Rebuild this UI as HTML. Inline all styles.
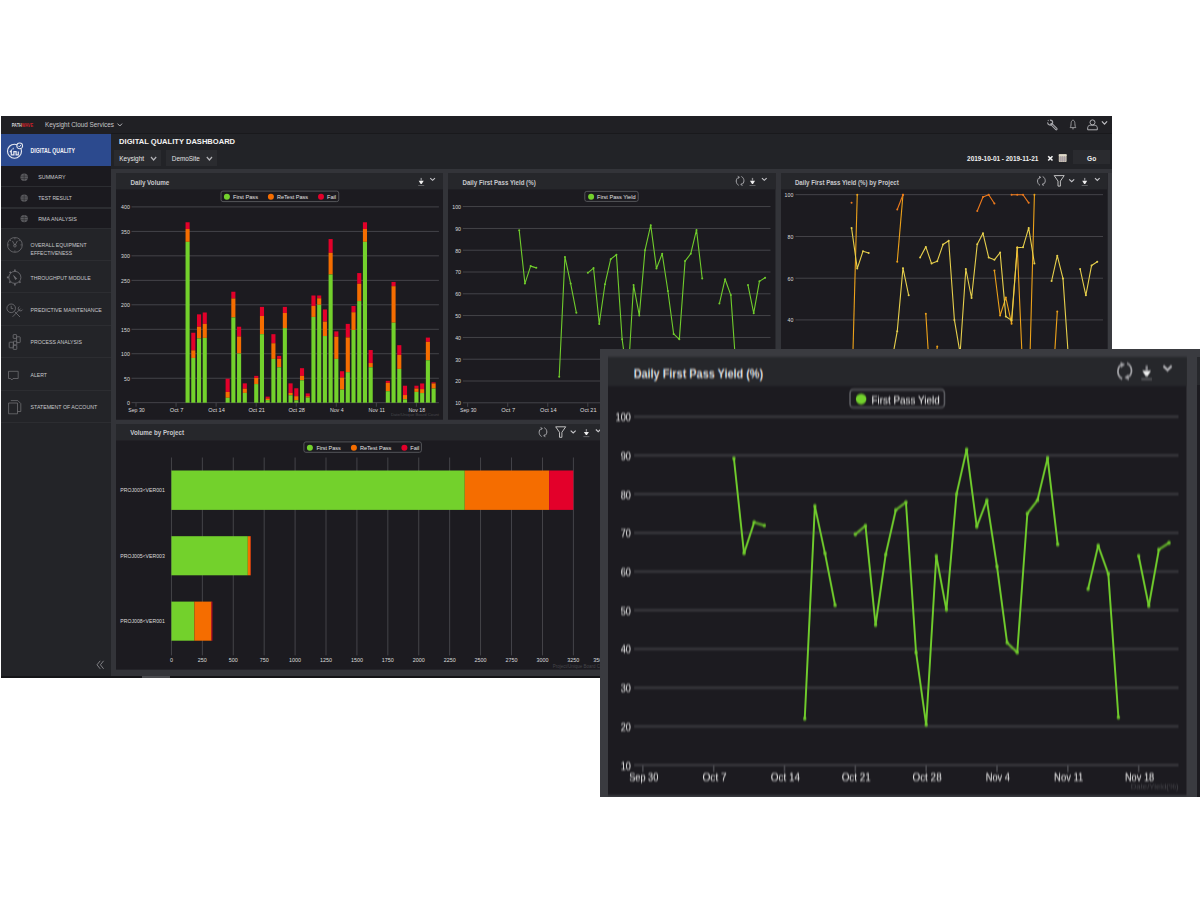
<!DOCTYPE html><html><head><meta charset="utf-8"><style>
html,body{margin:0;padding:0;background:#ffffff;width:1200px;height:900px;overflow:hidden;position:relative;font-family:"Liberation Sans", sans-serif}
svg{display:block;position:absolute}
</style></head><body>
<div style="position:absolute;left:1px;top:116px;width:1111px;height:17.7px;background:#202024"></div><svg width="1200" height="20" style="position:absolute;left:0;top:116px" font-family='"Liberation Sans", sans-serif'>
<g transform="translate(0,-116)">
<text x="11.8" y="127.1" font-size="4.9" fill="#d8d8d8" font-weight="bold" textLength="21.2" lengthAdjust="spacingAndGlyphs">PATH<tspan fill="#d0202a">WAVE</tspan></text>
<text x="45.00" y="127.10" font-size="7.0" fill="#c6c6c8" font-weight="normal" text-anchor="start" textLength="69.00" lengthAdjust="spacingAndGlyphs">Keysight Cloud Services</text>
<path d="M117.50,123.60 L119.80,126.00 L122.10,123.60" fill="none" stroke="#b0b0b4" stroke-width="1.0"/>
<g fill="none" stroke-linecap="round"><path d="M1051.5,124.2 L1056.3,129" stroke="#a8a8ac" stroke-width="2.6"/><path d="M1051.5,124.2 L1056.3,129" stroke="#202024" stroke-width="0.9"/><circle cx="1050.2" cy="122.6" r="2.5" stroke="#a8a8ac" stroke-width="1.1"/><path d="M1047.2,121.6 L1049.6,122.1 L1049.2,119.4" stroke="#202024" stroke-width="1.3"/></g>
<g fill="none" stroke="#a0a0a4" stroke-width="0.9"><path d="M1070.2,127.6 C1071.2,126.5 1071,123.5 1071.2,122.5 C1071.5,120.8 1072.3,120.2 1073,120.2 C1073.7,120.2 1074.5,120.8 1074.8,122.5 C1075,123.5 1074.8,126.5 1075.8,127.6 Z M1072.2,128.8 L1073.8,128.8"/></g>
<g fill="none" stroke="#b4b4b8" stroke-width="0.95"><circle cx="1092.5" cy="122.4" r="2.5"/><path d="M1087.7,129.8 L1087.7,127.6 C1087.7,125.8 1089.5,125.3 1090.6,125.2 L1094.4,125.2 C1095.5,125.3 1097.3,125.8 1097.3,127.6 L1097.3,129.8 Z"/></g>
<path d="M1101.90,121.40 L1104.50,124.20 L1107.10,121.40" fill="none" stroke="#c0c0c4" stroke-width="1.15"/>
</g></svg>
<div style="position:absolute;left:1px;top:133.7px;width:110px;height:543.8px;background:#232428"></div>
<div style="position:absolute;left:1px;top:133.7px;width:110px;height:31.9px;background:#2c4a8e"></div>
<div style="position:absolute;left:1px;top:165.6px;width:110px;height:62px;background:#1b1a1f"></div>
<div style="position:absolute;left:1px;top:186.2px;width:110px;height:1.3px;background:#2c2d31"></div>
<div style="position:absolute;left:1px;top:207.4px;width:110px;height:1.3px;background:#2c2d31"></div>
<div style="position:absolute;left:1px;top:227.6px;width:110px;height:1.2px;background:#2c2d31"></div>
<div style="position:absolute;left:1px;top:260.2px;width:110px;height:1.0px;background:#2c2d31"></div>
<div style="position:absolute;left:1px;top:292.4px;width:110px;height:1.0px;background:#2c2d31"></div>
<div style="position:absolute;left:1px;top:325.1px;width:110px;height:1.0px;background:#2c2d31"></div>
<div style="position:absolute;left:1px;top:357.4px;width:110px;height:1.0px;background:#2c2d31"></div>
<div style="position:absolute;left:1px;top:390.0px;width:110px;height:1.0px;background:#2c2d31"></div>
<div style="position:absolute;left:1px;top:422.3px;width:110px;height:1.0px;background:#2c2d31"></div><svg width="112" height="562" style="position:absolute;left:0;top:116px" font-family='"Liberation Sans", sans-serif'>
<g transform="translate(0,-116)">
<text x="30.50" y="152.80" font-size="6.3" fill="#f2f2f6" font-weight="bold" text-anchor="start" textLength="44.50" lengthAdjust="spacingAndGlyphs">DIGITAL QUALITY</text>
<g transform="translate(14.5,151.2)" fill="none" stroke="#e6e8f0" stroke-width="1.15"><circle r="7"/><path d="M-4.6,1 L-3.2,-0.6 L-3.2,3.6 L-0.6,3.6 L-0.6,0.4 L1.6,0.4 L1.6,3.6 L3.8,3.6 L3.8,0.4" stroke-width="1.2"/><path d="M-1.6,-1.6 L-1.2,-3.4" stroke-width="1"/><circle cx="5.2" cy="-5.3" r="2.9" fill="#2c4a8e" stroke-width="1.05"/><path d="M3.9,-5.3 L4.9,-4.3 L6.5,-6.3" stroke-width="0.9"/></g>
<text x="38.20" y="179.20" font-size="6.1" fill="#c9c9cc" font-weight="normal" text-anchor="start" textLength="27.30" lengthAdjust="spacingAndGlyphs">SUMMARY</text>
<g transform="translate(24.2,177.3)"><circle r="3.7" fill="#5c5c60"/><path d="M-3.5,-1.1 L3.5,-1.1 M-3.5,1.1 L3.5,1.1 M0,-3.6 L0,3.6" stroke="#2a2a2e" stroke-width="0.6"/></g>
<text x="38.20" y="200.00" font-size="6.1" fill="#c9c9cc" font-weight="normal" text-anchor="start" textLength="33.70" lengthAdjust="spacingAndGlyphs">TEST RESULT</text>
<g transform="translate(24.2,198.1)"><circle r="3.7" fill="#5c5c60"/><path d="M-3.5,-1.1 L3.5,-1.1 M-3.5,1.1 L3.5,1.1 M0,-3.6 L0,3.6" stroke="#2a2a2e" stroke-width="0.6"/></g>
<text x="38.20" y="220.50" font-size="6.1" fill="#c9c9cc" font-weight="normal" text-anchor="start" textLength="38.70" lengthAdjust="spacingAndGlyphs">RMA ANALYSIS</text>
<g transform="translate(24.2,218.6)"><circle r="3.7" fill="#5c5c60"/><path d="M-3.5,-1.1 L3.5,-1.1 M-3.5,1.1 L3.5,1.1 M0,-3.6 L0,3.6" stroke="#2a2a2e" stroke-width="0.6"/></g>
<text x="30.60" y="247.10" font-size="6.1" fill="#c9c9cc" font-weight="normal" text-anchor="start" textLength="56.00" lengthAdjust="spacingAndGlyphs">OVERALL EQUIPMENT</text>
<text x="30.60" y="255.10" font-size="6.1" fill="#c9c9cc" font-weight="normal" text-anchor="start" textLength="41.50" lengthAdjust="spacingAndGlyphs">EFFECTIVENESS</text>
<text x="30.60" y="279.50" font-size="6.1" fill="#c9c9cc" font-weight="normal" text-anchor="start" textLength="60.10" lengthAdjust="spacingAndGlyphs">THROUGHPUT MODULE</text>
<text x="30.60" y="311.90" font-size="6.1" fill="#c9c9cc" font-weight="normal" text-anchor="start" textLength="71.20" lengthAdjust="spacingAndGlyphs">PREDICTIVE MAINTENANCE</text>
<text x="30.60" y="344.40" font-size="6.1" fill="#c9c9cc" font-weight="normal" text-anchor="start" textLength="51.30" lengthAdjust="spacingAndGlyphs">PROCESS ANALYSIS</text>
<text x="30.60" y="376.80" font-size="6.1" fill="#c9c9cc" font-weight="normal" text-anchor="start" textLength="16.40" lengthAdjust="spacingAndGlyphs">ALERT</text>
<text x="30.60" y="409.20" font-size="6.1" fill="#c9c9cc" font-weight="normal" text-anchor="start" textLength="66.60" lengthAdjust="spacingAndGlyphs">STATEMENT OF ACCOUNT</text>
<g transform="translate(14.9,244.9)" fill="none" stroke="#6e6e72" stroke-width="0.8"><circle r="7.4"/><path d="M-2.5,-4 L0,0.5 L2.5,-4 M0,-7 L0,-5.5 M5.6,0 L7,0 M-5.6,0 L-7,0 M0,5.6 L0,7 M-4,-4 L-5,-5 M4,-4 L5,-5"/><circle cx="0" cy="0.8" r="1.3"/></g>
<g transform="translate(14.9,277.4)" fill="none" stroke="#6e6e72" stroke-width="0.85"><circle r="6"/><path d="M0,-8 L0,-6 M-8,0 L-6,0 M-5.2,-5.6 L-4.2,-4.4 M-5.6,5.2 L-4.4,4.2 M0,6 L0,8 M5.6,5.2 L4.4,4.2" stroke-width="1.6"/><path d="M-1.2,-1.8 L1.8,1.2 L0.6,2 Z" fill="#6e6e72"/></g>
<g fill="none" stroke="#6e6e72" stroke-width="0.85"><circle cx="11.2" cy="308.3" r="4.3"/><path d="M11.2,305.8 L11.2,308.6 L13.2,308.6"/><path d="M12.6,316.8 L20.6,308.6 M14.6,311.6 L20,317"/><path d="M19.4,306.6 A2.3,2.3 0 1 0 22.6,309.6"/></g>
<g fill="none" stroke="#6e6e72" stroke-width="0.85"><rect x="13.2" y="334.6" width="3.4" height="3.8" rx="0.5"/><rect x="16.6" y="336.8" width="3.6" height="5.8" rx="0.5"/><rect x="9.2" y="342.2" width="4.2" height="5.6" rx="0.5"/><rect x="13.4" y="341.2" width="3.4" height="3.8" rx="0.5"/><rect x="13.2" y="345.2" width="3.6" height="4.2" rx="0.5"/></g>
<path d="M8.5,371.3 L18.2,371.3 L18.2,378.5 L13,378.5 L11.8,380 L10.6,378.5 L8.5,378.5 Z" fill="none" stroke="#6e6e72" stroke-width="0.8"/>
<g fill="none" stroke="#6e6e72" stroke-width="0.8"><path d="M8.6,403 L8.6,413.8 L17.5,413.8 L17.5,403 Z M10.8,400.6 L17.8,400.6 L20.8,403.6 L20.8,411.5 L17.5,411.5"/></g>
<path d="M100.2,660.8 L97,664.8 L100.2,668.8 M103.6,660.8 L100.4,664.8 L103.6,668.8" fill="none" stroke="#8a8a8e" stroke-width="0.9"/>
</g></svg>
<div style="position:absolute;left:111px;top:133.7px;width:1001px;height:544px;background:#333439"></div>
<div style="position:absolute;left:111px;top:133.7px;width:1001px;height:35px;background:#222327"></div>
<div style="position:absolute;left:114.1px;top:150.1px;width:47.2px;height:15.6px;background:#2a2b2f"></div>
<div style="position:absolute;left:166px;top:150.1px;width:51px;height:15.6px;background:#2a2b2f"></div>
<div style="position:absolute;left:1073px;top:150.1px;width:37.1px;height:14.4px;background:#2a2b2f"></div>
<div style="position:absolute;left:111px;top:133.2px;width:1001px;height:0.8px;background:#19191c"></div>
<div style="position:absolute;left:1107.6px;top:172.9px;width:4.2px;height:503.2px;background:#3a3b40"></div><svg width="1200" height="60" style="position:absolute;left:0;top:116px" font-family='"Liberation Sans", sans-serif'>
<g transform="translate(0,-116)">
<text x="119.10" y="143.90" font-size="7.8" fill="#f2f2f2" font-weight="bold" text-anchor="start" textLength="116.00" lengthAdjust="spacingAndGlyphs">DIGITAL QUALITY DASHBOARD</text>
<text x="119.30" y="161.10" font-size="7.0" fill="#e8e8e8" font-weight="normal" text-anchor="start" textLength="24.80" lengthAdjust="spacingAndGlyphs">Keysight</text>
<path d="M151.00,157.00 L153.60,160.00 L156.20,157.00" fill="none" stroke="#b4b4b8" stroke-width="1.2"/>
<text x="171.80" y="161.10" font-size="7.0" fill="#e0e0e0" font-weight="normal" text-anchor="start" textLength="28.00" lengthAdjust="spacingAndGlyphs">DemoSite</text>
<path d="M206.80,157.00 L209.40,160.00 L212.00,157.00" fill="none" stroke="#b4b4b8" stroke-width="1.2"/>
<text x="967.10" y="160.90" font-size="6.9" fill="#f0f0f0" font-weight="bold" text-anchor="start" textLength="71.30" lengthAdjust="spacingAndGlyphs">2019-10-01 - 2019-11-21</text>
<path d="M1048.2,156.2 l4.3,4.3 M1052.5,156.2 l-4.3,4.3" stroke="#f2f2f2" stroke-width="1.6"/>
<g><rect x="1058.8" y="154.3" width="7.8" height="7.7" rx="0.8" fill="#cfc9b4"/><rect x="1058.8" y="154.3" width="7.8" height="1.6" fill="#e0dccc"/><path d="M1060.8,156 L1060.8,162 M1062.7,156 L1062.7,162 M1064.6,156 L1064.6,162 M1058.8,158 L1066.6,158 M1058.8,160 L1066.6,160" stroke="#8a7d9a" stroke-width="0.5"/></g>
<text x="1091.60" y="160.60" font-size="7.0" fill="#f0f0f0" font-weight="bold" text-anchor="middle" textLength="9.20" lengthAdjust="spacingAndGlyphs">Go</text>
</g></svg>
<svg width="327.00" height="246.70" style="position:absolute;left:116.00px;top:172.90px" font-family='"Liberation Sans", sans-serif'>
<g transform="translate(-116.00,-172.90)">
<rect x="116.00" y="172.90" width="327.00" height="246.70" fill="#1c1b20"/>
<rect x="116.00" y="172.90" width="327.00" height="16.40" fill="#26272b"/>
<text x="130.40" y="184.70" font-size="7.3" fill="#c6c7cb" font-weight="bold" text-anchor="start" textLength="38.90" lengthAdjust="spacingAndGlyphs">Daily Volume</text>
<g transform="translate(421.20,180.80)"><rect x="-0.65" y="-3" width="1.3" height="2.6" fill="#8c8c90"/><path d="M-2.5,-0.2 L2.5,-0.2 L0.5,3 L-0.5,3 Z" fill="#f0f0f0"/><rect x="-3" y="4.2" width="6" height="0.8" fill="#6e6e72"/></g>
<path d="M430.25,177.98 L432.60,180.22 L434.95,177.98" fill="none" stroke="#c4c4c8" stroke-width="1.15"/>
<rect x="221.00" y="191.00" width="117.75" height="10.50" rx="2" fill="none" stroke="#5a5b60" stroke-width="0.9"/>
<circle cx="226.90" cy="196.6" r="3" fill="#73d12c"/>
<text x="233.00" y="199.20" font-size="6.1" fill="#e4e4e4" font-weight="normal" text-anchor="start" textLength="25.00" lengthAdjust="spacingAndGlyphs">First Pass</text>
<circle cx="270.90" cy="196.6" r="3" fill="#f56d00"/>
<text x="277.00" y="199.20" font-size="6.1" fill="#e4e4e4" font-weight="normal" text-anchor="start" textLength="31.00" lengthAdjust="spacingAndGlyphs">ReTest Pass</text>
<circle cx="321.00" cy="196.6" r="3" fill="#e3002a"/>
<text x="327.00" y="199.20" font-size="6.1" fill="#e4e4e4" font-weight="normal" text-anchor="start" textLength="9.00" lengthAdjust="spacingAndGlyphs">Fail</text>
<rect x="131.5" y="402.15" width="307.40" height="0.9" fill="#48484d"/>
<text x="129.80" y="405.10" font-size="6.0" fill="#dcdcdc" font-weight="normal" text-anchor="end" textLength="2.90" lengthAdjust="spacingAndGlyphs">0</text>
<rect x="131.5" y="377.68" width="307.40" height="0.9" fill="#48484d"/>
<text x="129.80" y="380.62" font-size="6.0" fill="#dcdcdc" font-weight="normal" text-anchor="end" textLength="5.80" lengthAdjust="spacingAndGlyphs">50</text>
<rect x="131.5" y="353.20" width="307.40" height="0.9" fill="#48484d"/>
<text x="129.80" y="356.15" font-size="6.0" fill="#dcdcdc" font-weight="normal" text-anchor="end" textLength="8.70" lengthAdjust="spacingAndGlyphs">100</text>
<rect x="131.5" y="328.73" width="307.40" height="0.9" fill="#48484d"/>
<text x="129.80" y="331.68" font-size="6.0" fill="#dcdcdc" font-weight="normal" text-anchor="end" textLength="8.70" lengthAdjust="spacingAndGlyphs">150</text>
<rect x="131.5" y="304.25" width="307.40" height="0.9" fill="#48484d"/>
<text x="129.80" y="307.20" font-size="6.0" fill="#dcdcdc" font-weight="normal" text-anchor="end" textLength="8.70" lengthAdjust="spacingAndGlyphs">200</text>
<rect x="131.5" y="279.78" width="307.40" height="0.9" fill="#48484d"/>
<text x="129.80" y="282.73" font-size="6.0" fill="#dcdcdc" font-weight="normal" text-anchor="end" textLength="8.70" lengthAdjust="spacingAndGlyphs">250</text>
<rect x="131.5" y="255.30" width="307.40" height="0.9" fill="#48484d"/>
<text x="129.80" y="258.25" font-size="6.0" fill="#dcdcdc" font-weight="normal" text-anchor="end" textLength="8.70" lengthAdjust="spacingAndGlyphs">300</text>
<rect x="131.5" y="230.83" width="307.40" height="0.9" fill="#48484d"/>
<text x="129.80" y="233.78" font-size="6.0" fill="#dcdcdc" font-weight="normal" text-anchor="end" textLength="8.70" lengthAdjust="spacingAndGlyphs">350</text>
<rect x="131.5" y="206.35" width="307.40" height="0.9" fill="#48484d"/>
<text x="129.80" y="209.30" font-size="6.0" fill="#dcdcdc" font-weight="normal" text-anchor="end" textLength="8.70" lengthAdjust="spacingAndGlyphs">400</text>
<rect x="135.55" y="402.60" width="0.9" height="4" fill="#48484d"/>
<text x="136.50" y="411.60" font-size="5.8" fill="#dcdcdc" font-weight="normal" text-anchor="middle" textLength="16.50" lengthAdjust="spacingAndGlyphs">Sep 30</text>
<rect x="175.60" y="402.60" width="0.9" height="4" fill="#48484d"/>
<text x="176.55" y="411.60" font-size="5.8" fill="#dcdcdc" font-weight="normal" text-anchor="middle" textLength="13.75" lengthAdjust="spacingAndGlyphs">Oct 7</text>
<rect x="215.65" y="402.60" width="0.9" height="4" fill="#48484d"/>
<text x="216.60" y="411.60" font-size="5.8" fill="#dcdcdc" font-weight="normal" text-anchor="middle" textLength="16.50" lengthAdjust="spacingAndGlyphs">Oct 14</text>
<rect x="255.70" y="402.60" width="0.9" height="4" fill="#48484d"/>
<text x="256.65" y="411.60" font-size="5.8" fill="#dcdcdc" font-weight="normal" text-anchor="middle" textLength="16.50" lengthAdjust="spacingAndGlyphs">Oct 21</text>
<rect x="295.75" y="402.60" width="0.9" height="4" fill="#48484d"/>
<text x="296.70" y="411.60" font-size="5.8" fill="#dcdcdc" font-weight="normal" text-anchor="middle" textLength="16.50" lengthAdjust="spacingAndGlyphs">Oct 28</text>
<rect x="335.80" y="402.60" width="0.9" height="4" fill="#48484d"/>
<text x="336.75" y="411.60" font-size="5.8" fill="#dcdcdc" font-weight="normal" text-anchor="middle" textLength="13.75" lengthAdjust="spacingAndGlyphs">Nov 4</text>
<rect x="375.85" y="402.60" width="0.9" height="4" fill="#48484d"/>
<text x="376.80" y="411.60" font-size="5.8" fill="#dcdcdc" font-weight="normal" text-anchor="middle" textLength="16.50" lengthAdjust="spacingAndGlyphs">Nov 11</text>
<rect x="415.90" y="402.60" width="0.9" height="4" fill="#48484d"/>
<text x="416.85" y="411.60" font-size="5.8" fill="#dcdcdc" font-weight="normal" text-anchor="middle" textLength="16.50" lengthAdjust="spacingAndGlyphs">Nov 18</text>
<rect x="185.54" y="222.17" width="4.10" height="6.76" fill="#e3002a"/>
<rect x="185.54" y="228.93" width="4.10" height="12.82" fill="#f56d00"/>
<rect x="185.54" y="241.75" width="4.10" height="160.85" fill="#73d12c"/>
<rect x="191.26" y="332.65" width="4.10" height="17.57" fill="#e3002a"/>
<rect x="191.26" y="350.22" width="4.10" height="7.64" fill="#f56d00"/>
<rect x="191.26" y="357.86" width="4.10" height="44.74" fill="#73d12c"/>
<rect x="196.99" y="314.25" width="4.10" height="12.38" fill="#e3002a"/>
<rect x="196.99" y="326.63" width="4.10" height="11.65" fill="#f56d00"/>
<rect x="196.99" y="338.28" width="4.10" height="64.32" fill="#73d12c"/>
<rect x="202.71" y="312.39" width="4.10" height="11.41" fill="#e3002a"/>
<rect x="202.71" y="323.79" width="4.10" height="14.00" fill="#f56d00"/>
<rect x="202.71" y="337.79" width="4.10" height="64.81" fill="#73d12c"/>
<rect x="225.59" y="378.61" width="4.10" height="13.27" fill="#e3002a"/>
<rect x="225.59" y="391.88" width="4.10" height="5.83" fill="#f56d00"/>
<rect x="225.59" y="397.71" width="4.10" height="4.89" fill="#73d12c"/>
<rect x="231.31" y="291.63" width="4.10" height="6.76" fill="#e3002a"/>
<rect x="231.31" y="298.39" width="4.10" height="18.89" fill="#f56d00"/>
<rect x="231.31" y="317.28" width="4.10" height="85.32" fill="#73d12c"/>
<rect x="237.04" y="326.63" width="4.10" height="9.79" fill="#e3002a"/>
<rect x="237.04" y="336.42" width="4.10" height="16.99" fill="#f56d00"/>
<rect x="237.04" y="353.41" width="4.10" height="49.19" fill="#73d12c"/>
<rect x="242.76" y="383.26" width="4.10" height="5.34" fill="#e3002a"/>
<rect x="242.76" y="388.60" width="4.10" height="4.21" fill="#f56d00"/>
<rect x="242.76" y="392.81" width="4.10" height="9.79" fill="#73d12c"/>
<rect x="254.20" y="375.78" width="4.10" height="2.10" fill="#e3002a"/>
<rect x="254.20" y="377.88" width="4.10" height="6.07" fill="#f56d00"/>
<rect x="254.20" y="383.95" width="4.10" height="18.65" fill="#73d12c"/>
<rect x="259.92" y="306.80" width="4.10" height="9.10" fill="#e3002a"/>
<rect x="259.92" y="315.91" width="4.10" height="18.16" fill="#f56d00"/>
<rect x="259.92" y="334.07" width="4.10" height="68.53" fill="#73d12c"/>
<rect x="265.64" y="396.53" width="4.10" height="1.86" fill="#e3002a"/>
<rect x="265.64" y="398.39" width="4.10" height="1.66" fill="#f56d00"/>
<rect x="265.64" y="400.05" width="4.10" height="2.55" fill="#73d12c"/>
<rect x="271.36" y="334.07" width="4.10" height="9.10" fill="#e3002a"/>
<rect x="271.36" y="343.17" width="4.10" height="15.62" fill="#f56d00"/>
<rect x="271.36" y="358.79" width="4.10" height="43.81" fill="#73d12c"/>
<rect x="277.09" y="355.75" width="4.10" height="3.03" fill="#e3002a"/>
<rect x="277.09" y="358.79" width="4.10" height="8.37" fill="#f56d00"/>
<rect x="277.09" y="367.16" width="4.10" height="35.44" fill="#73d12c"/>
<rect x="282.81" y="306.80" width="4.10" height="6.07" fill="#e3002a"/>
<rect x="282.81" y="312.87" width="4.10" height="15.13" fill="#f56d00"/>
<rect x="282.81" y="328.00" width="4.10" height="74.60" fill="#73d12c"/>
<rect x="288.53" y="383.26" width="4.10" height="9.55" fill="#e3002a"/>
<rect x="288.53" y="392.81" width="4.10" height="2.35" fill="#f56d00"/>
<rect x="288.53" y="395.16" width="4.10" height="7.44" fill="#73d12c"/>
<rect x="294.25" y="388.16" width="4.10" height="7.93" fill="#e3002a"/>
<rect x="294.25" y="396.09" width="4.10" height="4.16" fill="#f56d00"/>
<rect x="294.25" y="400.25" width="4.10" height="2.35" fill="#73d12c"/>
<rect x="299.97" y="368.09" width="4.10" height="7.69" fill="#e3002a"/>
<rect x="299.97" y="375.78" width="4.10" height="4.45" fill="#f56d00"/>
<rect x="299.97" y="380.23" width="4.10" height="22.37" fill="#73d12c"/>
<rect x="305.69" y="393.30" width="4.10" height="2.79" fill="#e3002a"/>
<rect x="305.69" y="396.09" width="4.10" height="1.37" fill="#f56d00"/>
<rect x="305.69" y="397.46" width="4.10" height="5.14" fill="#73d12c"/>
<rect x="311.41" y="295.40" width="4.10" height="10.48" fill="#e3002a"/>
<rect x="311.41" y="305.87" width="4.10" height="10.96" fill="#f56d00"/>
<rect x="311.41" y="316.84" width="4.10" height="85.76" fill="#73d12c"/>
<rect x="317.14" y="295.40" width="4.10" height="2.79" fill="#e3002a"/>
<rect x="317.14" y="298.19" width="4.10" height="6.51" fill="#f56d00"/>
<rect x="317.14" y="304.70" width="4.10" height="97.90" fill="#73d12c"/>
<rect x="322.86" y="309.35" width="4.10" height="12.14" fill="#e3002a"/>
<rect x="322.86" y="321.49" width="4.10" height="14.44" fill="#f56d00"/>
<rect x="322.86" y="335.93" width="4.10" height="66.67" fill="#73d12c"/>
<rect x="328.58" y="238.96" width="4.10" height="13.75" fill="#e3002a"/>
<rect x="328.58" y="252.72" width="4.10" height="21.68" fill="#f56d00"/>
<rect x="328.58" y="274.40" width="4.10" height="128.20" fill="#73d12c"/>
<rect x="334.30" y="331.28" width="4.10" height="5.34" fill="#e3002a"/>
<rect x="334.30" y="336.62" width="4.10" height="22.17" fill="#f56d00"/>
<rect x="334.30" y="358.79" width="4.10" height="43.81" fill="#73d12c"/>
<rect x="340.02" y="371.13" width="4.10" height="6.31" fill="#e3002a"/>
<rect x="340.02" y="377.44" width="4.10" height="12.09" fill="#f56d00"/>
<rect x="340.02" y="389.53" width="4.10" height="13.07" fill="#73d12c"/>
<rect x="345.74" y="323.79" width="4.10" height="13.56" fill="#e3002a"/>
<rect x="345.74" y="337.35" width="4.10" height="34.71" fill="#f56d00"/>
<rect x="345.74" y="372.06" width="4.10" height="30.54" fill="#73d12c"/>
<rect x="351.46" y="305.87" width="4.10" height="6.27" fill="#e3002a"/>
<rect x="351.46" y="312.14" width="4.10" height="17.72" fill="#f56d00"/>
<rect x="351.46" y="329.86" width="4.10" height="72.74" fill="#73d12c"/>
<rect x="357.19" y="272.98" width="4.10" height="10.72" fill="#e3002a"/>
<rect x="357.19" y="283.70" width="4.10" height="17.28" fill="#f56d00"/>
<rect x="357.19" y="300.98" width="4.10" height="101.62" fill="#73d12c"/>
<rect x="362.91" y="222.17" width="4.10" height="6.76" fill="#e3002a"/>
<rect x="362.91" y="228.93" width="4.10" height="12.82" fill="#f56d00"/>
<rect x="362.91" y="241.75" width="4.10" height="160.85" fill="#73d12c"/>
<rect x="368.63" y="349.93" width="4.10" height="13.02" fill="#e3002a"/>
<rect x="368.63" y="362.95" width="4.10" height="4.21" fill="#f56d00"/>
<rect x="368.63" y="367.16" width="4.10" height="35.44" fill="#73d12c"/>
<rect x="385.79" y="380.77" width="4.10" height="2.01" fill="#e3002a"/>
<rect x="385.79" y="382.78" width="4.10" height="8.32" fill="#f56d00"/>
<rect x="385.79" y="391.10" width="4.10" height="11.50" fill="#73d12c"/>
<rect x="391.51" y="281.84" width="4.10" height="4.26" fill="#e3002a"/>
<rect x="391.51" y="286.10" width="4.10" height="36.52" fill="#f56d00"/>
<rect x="391.51" y="322.62" width="4.10" height="79.98" fill="#73d12c"/>
<rect x="397.24" y="345.08" width="4.10" height="9.79" fill="#e3002a"/>
<rect x="397.24" y="354.87" width="4.10" height="13.95" fill="#f56d00"/>
<rect x="397.24" y="368.82" width="4.10" height="33.78" fill="#73d12c"/>
<rect x="402.96" y="385.61" width="4.10" height="9.35" fill="#e3002a"/>
<rect x="402.96" y="394.96" width="4.10" height="4.26" fill="#f56d00"/>
<rect x="402.96" y="399.22" width="4.10" height="3.38" fill="#73d12c"/>
<rect x="414.40" y="385.61" width="4.10" height="2.84" fill="#e3002a"/>
<rect x="414.40" y="388.45" width="4.10" height="3.38" fill="#f56d00"/>
<rect x="414.40" y="391.83" width="4.10" height="10.77" fill="#73d12c"/>
<rect x="420.12" y="383.36" width="4.10" height="5.68" fill="#e3002a"/>
<rect x="420.12" y="389.04" width="4.10" height="3.92" fill="#f56d00"/>
<rect x="420.12" y="392.96" width="4.10" height="9.64" fill="#73d12c"/>
<rect x="425.84" y="337.50" width="4.10" height="4.26" fill="#e3002a"/>
<rect x="425.84" y="341.76" width="4.10" height="18.41" fill="#f56d00"/>
<rect x="425.84" y="360.16" width="4.10" height="42.44" fill="#73d12c"/>
<rect x="431.56" y="382.24" width="4.10" height="1.13" fill="#e3002a"/>
<rect x="431.56" y="383.36" width="4.10" height="5.09" fill="#f56d00"/>
<rect x="431.56" y="388.45" width="4.10" height="14.15" fill="#73d12c"/>
<text x="439.00" y="416.30" font-size="4.2" fill="#47474c" font-weight="normal" text-anchor="end" textLength="48.00" lengthAdjust="spacingAndGlyphs">Date/Unique Board Count</text>
</g></svg>
<div style="position:absolute;left:448.30px;top:172.90px;width:327.45px;height:246.70px;overflow:hidden"><svg width="327.45" height="246.70" style="position:absolute;left:0;top:0;" font-family='"Liberation Sans", sans-serif'>
<g transform="translate(-448.30,-172.90)">
<rect x="448.30" y="172.90" width="327.45" height="246.70" fill="#1c1b20"/>
<rect x="448.30" y="172.90" width="327.45" height="16.40" fill="#26272b"/>
<text x="462.80" y="184.60" font-size="7.3" fill="#c6c7cb" font-weight="bold" text-anchor="start" textLength="73.20" lengthAdjust="spacingAndGlyphs">Daily First Pass Yield (%)</text>
<g transform="translate(740.40,180.80)" fill="none" stroke="#a4a4a8" stroke-width="1"><path d="M-1.3,-3.6 C-4.6,-2.6 -4.8,2.6 -1.4,4.4"/><path d="M1.3,-4.4 C4.8,-2.6 4.6,2.6 1.3,3.6"/><path d="M-2.4,-4.6 L-0.6,-3.6 L-2.2,-2.4" stroke-width="0.9"/><path d="M2.4,4.6 L0.6,3.6 L2.2,2.4" stroke-width="0.9"/></g>
<g transform="translate(752.80,180.80)"><rect x="-0.65" y="-3" width="1.3" height="2.6" fill="#8c8c90"/><path d="M-2.5,-0.2 L2.5,-0.2 L0.5,3 L-0.5,3 Z" fill="#f0f0f0"/><rect x="-3" y="4.2" width="6" height="0.8" fill="#6e6e72"/></g>
<path d="M762.25,177.98 L764.60,180.22 L766.95,177.98" fill="none" stroke="#c4c4c8" stroke-width="1.15"/>
<rect x="585.10" y="191.25" width="53.40" height="10.05" rx="2" fill="none" stroke="#5a5b60" stroke-width="0.9"/>
<circle cx="591.4" cy="196.6" r="3" fill="#73d12c"/>
<text x="597.30" y="199.40" font-size="6.1" fill="#e4e4e4" font-weight="normal" text-anchor="start" textLength="38.50" lengthAdjust="spacingAndGlyphs">First Pass Yield</text>
<rect x="463.1" y="402.25" width="307.70" height="0.9" fill="#48484d"/>
<text x="461.30" y="405.20" font-size="6.0" fill="#dcdcdc" font-weight="normal" text-anchor="end" textLength="5.80" lengthAdjust="spacingAndGlyphs">10</text>
<rect x="463.1" y="380.45" width="307.70" height="0.9" fill="#48484d"/>
<text x="461.30" y="383.40" font-size="6.0" fill="#dcdcdc" font-weight="normal" text-anchor="end" textLength="5.80" lengthAdjust="spacingAndGlyphs">20</text>
<rect x="463.1" y="358.65" width="307.70" height="0.9" fill="#48484d"/>
<text x="461.30" y="361.60" font-size="6.0" fill="#dcdcdc" font-weight="normal" text-anchor="end" textLength="5.80" lengthAdjust="spacingAndGlyphs">30</text>
<rect x="463.1" y="336.85" width="307.70" height="0.9" fill="#48484d"/>
<text x="461.30" y="339.80" font-size="6.0" fill="#dcdcdc" font-weight="normal" text-anchor="end" textLength="5.80" lengthAdjust="spacingAndGlyphs">40</text>
<rect x="463.1" y="315.05" width="307.70" height="0.9" fill="#48484d"/>
<text x="461.30" y="318.00" font-size="6.0" fill="#dcdcdc" font-weight="normal" text-anchor="end" textLength="5.80" lengthAdjust="spacingAndGlyphs">50</text>
<rect x="463.1" y="293.25" width="307.70" height="0.9" fill="#48484d"/>
<text x="461.30" y="296.20" font-size="6.0" fill="#dcdcdc" font-weight="normal" text-anchor="end" textLength="5.80" lengthAdjust="spacingAndGlyphs">60</text>
<rect x="463.1" y="271.45" width="307.70" height="0.9" fill="#48484d"/>
<text x="461.30" y="274.40" font-size="6.0" fill="#dcdcdc" font-weight="normal" text-anchor="end" textLength="5.80" lengthAdjust="spacingAndGlyphs">70</text>
<rect x="463.1" y="249.65" width="307.70" height="0.9" fill="#48484d"/>
<text x="461.30" y="252.60" font-size="6.0" fill="#dcdcdc" font-weight="normal" text-anchor="end" textLength="5.80" lengthAdjust="spacingAndGlyphs">80</text>
<rect x="463.1" y="227.85" width="307.70" height="0.9" fill="#48484d"/>
<text x="461.30" y="230.80" font-size="6.0" fill="#dcdcdc" font-weight="normal" text-anchor="end" textLength="5.80" lengthAdjust="spacingAndGlyphs">90</text>
<rect x="463.1" y="206.05" width="307.70" height="0.9" fill="#48484d"/>
<text x="461.30" y="209.00" font-size="6.0" fill="#dcdcdc" font-weight="normal" text-anchor="end" textLength="8.70" lengthAdjust="spacingAndGlyphs">100</text>
<rect x="467.55" y="402.70" width="0.9" height="4" fill="#48484d"/>
<text x="468.50" y="411.60" font-size="5.8" fill="#dcdcdc" font-weight="normal" text-anchor="middle" textLength="16.50" lengthAdjust="spacingAndGlyphs">Sep 30</text>
<rect x="507.59" y="402.70" width="0.9" height="4" fill="#48484d"/>
<text x="508.54" y="411.60" font-size="5.8" fill="#dcdcdc" font-weight="normal" text-anchor="middle" textLength="13.75" lengthAdjust="spacingAndGlyphs">Oct 7</text>
<rect x="547.63" y="402.70" width="0.9" height="4" fill="#48484d"/>
<text x="548.58" y="411.60" font-size="5.8" fill="#dcdcdc" font-weight="normal" text-anchor="middle" textLength="16.50" lengthAdjust="spacingAndGlyphs">Oct 14</text>
<rect x="587.67" y="402.70" width="0.9" height="4" fill="#48484d"/>
<text x="588.62" y="411.60" font-size="5.8" fill="#dcdcdc" font-weight="normal" text-anchor="middle" textLength="16.50" lengthAdjust="spacingAndGlyphs">Oct 21</text>
<rect x="627.71" y="402.70" width="0.9" height="4" fill="#48484d"/>
<text x="628.66" y="411.60" font-size="5.8" fill="#dcdcdc" font-weight="normal" text-anchor="middle" textLength="16.50" lengthAdjust="spacingAndGlyphs">Oct 28</text>
<rect x="667.75" y="402.70" width="0.9" height="4" fill="#48484d"/>
<text x="668.70" y="411.60" font-size="5.8" fill="#dcdcdc" font-weight="normal" text-anchor="middle" textLength="13.75" lengthAdjust="spacingAndGlyphs">Nov 4</text>
<rect x="707.79" y="402.70" width="0.9" height="4" fill="#48484d"/>
<text x="708.74" y="411.60" font-size="5.8" fill="#dcdcdc" font-weight="normal" text-anchor="middle" textLength="16.50" lengthAdjust="spacingAndGlyphs">Nov 11</text>
<rect x="747.83" y="402.70" width="0.9" height="4" fill="#48484d"/>
<text x="748.78" y="411.60" font-size="5.8" fill="#dcdcdc" font-weight="normal" text-anchor="middle" textLength="16.50" lengthAdjust="spacingAndGlyphs">Nov 18</text>
<polyline points="519.48,230.04 525.20,283.45 530.92,266.01 536.64,267.76" fill="none" stroke="#70cc2c" stroke-width="1.1" stroke-linejoin="round"/>
<circle cx="519.48" cy="230.04" r="1.0" fill="#70cc2c"/>
<circle cx="525.20" cy="283.45" r="1.0" fill="#70cc2c"/>
<circle cx="530.92" cy="266.01" r="1.0" fill="#70cc2c"/>
<circle cx="536.64" cy="267.76" r="1.0" fill="#70cc2c"/>
<polyline points="559.52,376.54 565.24,256.86 570.96,283.45 576.68,312.67" fill="none" stroke="#70cc2c" stroke-width="1.1" stroke-linejoin="round"/>
<circle cx="559.52" cy="376.54" r="1.0" fill="#70cc2c"/>
<circle cx="565.24" cy="256.86" r="1.0" fill="#70cc2c"/>
<circle cx="570.96" cy="283.45" r="1.0" fill="#70cc2c"/>
<circle cx="576.68" cy="312.67" r="1.0" fill="#70cc2c"/>
<polyline points="588.12,272.77 593.84,267.98 599.56,323.78 605.28,284.11 611.00,259.04 616.72,254.68 622.44,339.26 628.16,380.03 633.88,284.98 639.60,315.28 645.32,250.10 651.04,225.03 656.76,268.41 662.48,253.59 668.20,290.87 673.92,333.81 679.64,339.26 685.36,261.00 691.08,253.59 696.80,229.83 702.52,278.44" fill="none" stroke="#70cc2c" stroke-width="1.1" stroke-linejoin="round"/>
<circle cx="588.12" cy="272.77" r="1.0" fill="#70cc2c"/>
<circle cx="593.84" cy="267.98" r="1.0" fill="#70cc2c"/>
<circle cx="599.56" cy="323.78" r="1.0" fill="#70cc2c"/>
<circle cx="605.28" cy="284.11" r="1.0" fill="#70cc2c"/>
<circle cx="611.00" cy="259.04" r="1.0" fill="#70cc2c"/>
<circle cx="616.72" cy="254.68" r="1.0" fill="#70cc2c"/>
<circle cx="622.44" cy="339.26" r="1.0" fill="#70cc2c"/>
<circle cx="628.16" cy="380.03" r="1.0" fill="#70cc2c"/>
<circle cx="633.88" cy="284.98" r="1.0" fill="#70cc2c"/>
<circle cx="639.60" cy="315.28" r="1.0" fill="#70cc2c"/>
<circle cx="645.32" cy="250.10" r="1.0" fill="#70cc2c"/>
<circle cx="651.04" cy="225.03" r="1.0" fill="#70cc2c"/>
<circle cx="656.76" cy="268.41" r="1.0" fill="#70cc2c"/>
<circle cx="662.48" cy="253.59" r="1.0" fill="#70cc2c"/>
<circle cx="668.20" cy="290.87" r="1.0" fill="#70cc2c"/>
<circle cx="673.92" cy="333.81" r="1.0" fill="#70cc2c"/>
<circle cx="679.64" cy="339.26" r="1.0" fill="#70cc2c"/>
<circle cx="685.36" cy="261.00" r="1.0" fill="#70cc2c"/>
<circle cx="691.08" cy="253.59" r="1.0" fill="#70cc2c"/>
<circle cx="696.80" cy="229.83" r="1.0" fill="#70cc2c"/>
<circle cx="702.52" cy="278.44" r="1.0" fill="#70cc2c"/>
<polyline points="719.68,303.51 725.40,279.09 731.12,295.01 736.84,375.89" fill="none" stroke="#70cc2c" stroke-width="1.1" stroke-linejoin="round"/>
<circle cx="719.68" cy="303.51" r="1.0" fill="#70cc2c"/>
<circle cx="725.40" cy="279.09" r="1.0" fill="#70cc2c"/>
<circle cx="731.12" cy="295.01" r="1.0" fill="#70cc2c"/>
<circle cx="736.84" cy="375.89" r="1.0" fill="#70cc2c"/>
<polyline points="748.28,284.98 754.00,313.10 759.72,281.27 765.44,277.57" fill="none" stroke="#70cc2c" stroke-width="1.1" stroke-linejoin="round"/>
<circle cx="748.28" cy="284.98" r="1.0" fill="#70cc2c"/>
<circle cx="754.00" cy="313.10" r="1.0" fill="#70cc2c"/>
<circle cx="759.72" cy="281.27" r="1.0" fill="#70cc2c"/>
<circle cx="765.44" cy="277.57" r="1.0" fill="#70cc2c"/>
<text x="770.80" y="416.30" font-size="4.2" fill="#47474c" font-weight="normal" text-anchor="end" textLength="27.00" lengthAdjust="spacingAndGlyphs">Date/Yield(%)</text>
</g></svg></div>
<svg width="326.60" height="246.70" style="position:absolute;left:781.00px;top:172.90px" font-family='"Liberation Sans", sans-serif'>
<g transform="translate(-781.00,-172.90)">
<rect x="781.00" y="172.90" width="326.60" height="246.70" fill="#1c1b20"/>
<rect x="781.00" y="172.90" width="326.60" height="16.40" fill="#26272b"/>
<text x="794.90" y="184.60" font-size="7.3" fill="#c6c7cb" font-weight="bold" text-anchor="start" textLength="103.90" lengthAdjust="spacingAndGlyphs">Daily First Pass Yield (%) by Project</text>
<g transform="translate(1041.40,180.80)" fill="none" stroke="#a4a4a8" stroke-width="1"><path d="M-1.3,-3.6 C-4.6,-2.6 -4.8,2.6 -1.4,4.4"/><path d="M1.3,-4.4 C4.8,-2.6 4.6,2.6 1.3,3.6"/><path d="M-2.4,-4.6 L-0.6,-3.6 L-2.2,-2.4" stroke-width="0.9"/><path d="M2.4,4.6 L0.6,3.6 L2.2,2.4" stroke-width="0.9"/></g>
<path d="M1054.2,175.5 L1064.2,175.5 L1060.4,181.0 L1060.4,186.0 L1058.0,186.0 L1058.0,181.0 Z" fill="none" stroke="#cfcfcf" stroke-width="0.9"/>
<path d="M1069.20,179.31 L1071.70,181.69 L1074.20,179.31" fill="none" stroke="#c4c4c8" stroke-width="1.15"/>
<g transform="translate(1084.70,180.80)"><rect x="-0.65" y="-3" width="1.3" height="2.6" fill="#8c8c90"/><path d="M-2.5,-0.2 L2.5,-0.2 L0.5,3 L-0.5,3 Z" fill="#f0f0f0"/><rect x="-3" y="4.2" width="6" height="0.8" fill="#6e6e72"/></g>
<path d="M1094.95,178.08 L1097.30,180.32 L1099.65,178.08" fill="none" stroke="#c4c4c8" stroke-width="1.15"/>
<rect x="795.4" y="402.85" width="307.60" height="0.9" fill="#48484d"/>
<text x="793.30" y="405.80" font-size="6.0" fill="#dcdcdc" font-weight="normal" text-anchor="end" textLength="2.90" lengthAdjust="spacingAndGlyphs">0</text>
<rect x="795.4" y="361.11" width="307.60" height="0.9" fill="#48484d"/>
<text x="793.30" y="364.06" font-size="6.0" fill="#dcdcdc" font-weight="normal" text-anchor="end" textLength="5.80" lengthAdjust="spacingAndGlyphs">20</text>
<rect x="795.4" y="319.37" width="307.60" height="0.9" fill="#48484d"/>
<text x="793.30" y="322.32" font-size="6.0" fill="#dcdcdc" font-weight="normal" text-anchor="end" textLength="5.80" lengthAdjust="spacingAndGlyphs">40</text>
<rect x="795.4" y="277.63" width="307.60" height="0.9" fill="#48484d"/>
<text x="793.30" y="280.58" font-size="6.0" fill="#dcdcdc" font-weight="normal" text-anchor="end" textLength="5.80" lengthAdjust="spacingAndGlyphs">60</text>
<rect x="795.4" y="235.89" width="307.60" height="0.9" fill="#48484d"/>
<text x="793.30" y="238.84" font-size="6.0" fill="#dcdcdc" font-weight="normal" text-anchor="end" textLength="5.80" lengthAdjust="spacingAndGlyphs">80</text>
<rect x="795.4" y="194.15" width="307.60" height="0.9" fill="#48484d"/>
<text x="793.30" y="197.10" font-size="6.0" fill="#dcdcdc" font-weight="normal" text-anchor="end" textLength="8.70" lengthAdjust="spacingAndGlyphs">100</text>
<polyline points="851.54,403.30 857.25,194.60" fill="none" stroke="#eda21a" stroke-width="1.1" stroke-linejoin="round"/>
<circle cx="851.54" cy="403.30" r="1.0" fill="#eda21a"/>
<circle cx="857.25" cy="194.60" r="1.0" fill="#eda21a"/>
<polyline points="897.25,261.59 902.97,194.60" fill="none" stroke="#eda21a" stroke-width="1.1" stroke-linejoin="round"/>
<circle cx="897.25" cy="261.59" r="1.0" fill="#eda21a"/>
<circle cx="902.97" cy="194.60" r="1.0" fill="#eda21a"/>
<polyline points="925.83,313.77 931.55,403.30 937.26,346.32" fill="none" stroke="#eda21a" stroke-width="1.1" stroke-linejoin="round"/>
<circle cx="925.83" cy="313.77" r="1.0" fill="#eda21a"/>
<circle cx="931.55" cy="403.30" r="1.0" fill="#eda21a"/>
<circle cx="937.26" cy="346.32" r="1.0" fill="#eda21a"/>
<polyline points="994.41,270.36 1000.12,315.44 1005.84,297.49 1011.56,323.58 1017.27,247.19 1022.99,377.21 1028.70,403.30 1034.41,194.60" fill="none" stroke="#eda21a" stroke-width="1.1" stroke-linejoin="round"/>
<circle cx="994.41" cy="270.36" r="1.0" fill="#eda21a"/>
<circle cx="1000.12" cy="315.44" r="1.0" fill="#eda21a"/>
<circle cx="1005.84" cy="297.49" r="1.0" fill="#eda21a"/>
<circle cx="1011.56" cy="323.58" r="1.0" fill="#eda21a"/>
<circle cx="1017.27" cy="247.19" r="1.0" fill="#eda21a"/>
<circle cx="1022.99" cy="377.21" r="1.0" fill="#eda21a"/>
<circle cx="1028.70" cy="403.30" r="1.0" fill="#eda21a"/>
<circle cx="1034.41" cy="194.60" r="1.0" fill="#eda21a"/>
<polyline points="1051.56,403.30 1057.28,311.47" fill="none" stroke="#eda21a" stroke-width="1.1" stroke-linejoin="round"/>
<circle cx="1051.56" cy="403.30" r="1.0" fill="#eda21a"/>
<circle cx="1057.28" cy="311.47" r="1.0" fill="#eda21a"/>
<circle cx="851.54" cy="202.74" r="1.0" fill="#ee7a1c"/>
<polyline points="897.25,209.42 902.97,194.60" fill="none" stroke="#ee7a1c" stroke-width="1.1" stroke-linejoin="round"/>
<circle cx="897.25" cy="209.42" r="1.0" fill="#ee7a1c"/>
<circle cx="902.97" cy="194.60" r="1.0" fill="#ee7a1c"/>
<polyline points="977.26,210.88 982.98,196.90 988.70,194.60 994.41,203.37" fill="none" stroke="#ee7a1c" stroke-width="1.1" stroke-linejoin="round"/>
<circle cx="977.26" cy="210.88" r="1.0" fill="#ee7a1c"/>
<circle cx="982.98" cy="196.90" r="1.0" fill="#ee7a1c"/>
<circle cx="988.70" cy="194.60" r="1.0" fill="#ee7a1c"/>
<circle cx="994.41" cy="203.37" r="1.0" fill="#ee7a1c"/>
<polyline points="1011.56,194.60 1017.27,194.60 1022.99,194.60 1028.70,202.74" fill="none" stroke="#ee7a1c" stroke-width="1.1" stroke-linejoin="round"/>
<circle cx="1011.56" cy="194.60" r="1.0" fill="#ee7a1c"/>
<circle cx="1017.27" cy="194.60" r="1.0" fill="#ee7a1c"/>
<circle cx="1022.99" cy="194.60" r="1.0" fill="#ee7a1c"/>
<circle cx="1028.70" cy="202.74" r="1.0" fill="#ee7a1c"/>
<polyline points="851.54,227.78 857.25,268.48 862.97,251.16 868.68,252.83" fill="none" stroke="#e6cf4c" stroke-width="1.1" stroke-linejoin="round"/>
<circle cx="851.54" cy="227.78" r="1.0" fill="#e6cf4c"/>
<circle cx="857.25" cy="268.48" r="1.0" fill="#e6cf4c"/>
<circle cx="862.97" cy="251.16" r="1.0" fill="#e6cf4c"/>
<circle cx="868.68" cy="252.83" r="1.0" fill="#e6cf4c"/>
<polyline points="891.54,362.60 897.25,331.09 902.97,268.06 908.69,295.19" fill="none" stroke="#e6cf4c" stroke-width="1.1" stroke-linejoin="round"/>
<circle cx="891.54" cy="362.60" r="1.0" fill="#e6cf4c"/>
<circle cx="897.25" cy="331.09" r="1.0" fill="#e6cf4c"/>
<circle cx="902.97" cy="268.06" r="1.0" fill="#e6cf4c"/>
<circle cx="908.69" cy="295.19" r="1.0" fill="#e6cf4c"/>
<polyline points="920.12,257.42 925.83,246.78 931.55,263.47 937.26,261.18 942.98,244.48 948.69,240.72 954.40,319.82 960.12,353.21 965.84,268.90 971.55,297.91 977.26,244.06 982.98,233.21 988.70,257.42 994.41,259.71 1000.12,252.41 1005.84,316.48 1011.56,320.24 1017.27,247.61 1022.99,247.19 1028.70,227.78 1034.41,263.47" fill="none" stroke="#e6cf4c" stroke-width="1.1" stroke-linejoin="round"/>
<circle cx="920.12" cy="257.42" r="1.0" fill="#e6cf4c"/>
<circle cx="925.83" cy="246.78" r="1.0" fill="#e6cf4c"/>
<circle cx="931.55" cy="263.47" r="1.0" fill="#e6cf4c"/>
<circle cx="937.26" cy="261.18" r="1.0" fill="#e6cf4c"/>
<circle cx="942.98" cy="244.48" r="1.0" fill="#e6cf4c"/>
<circle cx="948.69" cy="240.72" r="1.0" fill="#e6cf4c"/>
<circle cx="954.40" cy="319.82" r="1.0" fill="#e6cf4c"/>
<circle cx="960.12" cy="353.21" r="1.0" fill="#e6cf4c"/>
<circle cx="965.84" cy="268.90" r="1.0" fill="#e6cf4c"/>
<circle cx="971.55" cy="297.91" r="1.0" fill="#e6cf4c"/>
<circle cx="977.26" cy="244.06" r="1.0" fill="#e6cf4c"/>
<circle cx="982.98" cy="233.21" r="1.0" fill="#e6cf4c"/>
<circle cx="988.70" cy="257.42" r="1.0" fill="#e6cf4c"/>
<circle cx="994.41" cy="259.71" r="1.0" fill="#e6cf4c"/>
<circle cx="1000.12" cy="252.41" r="1.0" fill="#e6cf4c"/>
<circle cx="1005.84" cy="316.48" r="1.0" fill="#e6cf4c"/>
<circle cx="1011.56" cy="320.24" r="1.0" fill="#e6cf4c"/>
<circle cx="1017.27" cy="247.61" r="1.0" fill="#e6cf4c"/>
<circle cx="1022.99" cy="247.19" r="1.0" fill="#e6cf4c"/>
<circle cx="1028.70" cy="227.78" r="1.0" fill="#e6cf4c"/>
<circle cx="1034.41" cy="263.47" r="1.0" fill="#e6cf4c"/>
<polyline points="1051.56,281.00 1057.28,255.54 1062.99,278.50 1068.70,361.56" fill="none" stroke="#e6cf4c" stroke-width="1.1" stroke-linejoin="round"/>
<circle cx="1051.56" cy="281.00" r="1.0" fill="#e6cf4c"/>
<circle cx="1057.28" cy="255.54" r="1.0" fill="#e6cf4c"/>
<circle cx="1062.99" cy="278.50" r="1.0" fill="#e6cf4c"/>
<circle cx="1068.70" cy="361.56" r="1.0" fill="#e6cf4c"/>
<polyline points="1080.13,268.90 1085.85,295.19 1091.57,265.35 1097.28,261.59" fill="none" stroke="#e6cf4c" stroke-width="1.1" stroke-linejoin="round"/>
<circle cx="1080.13" cy="268.90" r="1.0" fill="#e6cf4c"/>
<circle cx="1085.85" cy="295.19" r="1.0" fill="#e6cf4c"/>
<circle cx="1091.57" cy="265.35" r="1.0" fill="#e6cf4c"/>
<circle cx="1097.28" cy="261.59" r="1.0" fill="#e6cf4c"/>
</g></svg>
<svg width="659.45" height="245.60" style="position:absolute;left:116.30px;top:424.40px" font-family='"Liberation Sans", sans-serif'>
<g transform="translate(-116.30,-424.40)">
<rect x="116.30" y="424.40" width="659.45" height="245.60" fill="#1c1b20"/>
<rect x="116.30" y="424.40" width="659.45" height="16.50" fill="#26272b"/>
<text x="130.60" y="435.90" font-size="7.3" fill="#c6c7cb" font-weight="bold" text-anchor="start" textLength="53.70" lengthAdjust="spacingAndGlyphs">Volume by Project</text>
<g transform="translate(543.30,432.50)" fill="none" stroke="#a4a4a8" stroke-width="1"><path d="M-1.3,-3.6 C-4.6,-2.6 -4.8,2.6 -1.4,4.4"/><path d="M1.3,-4.4 C4.8,-2.6 4.6,2.6 1.3,3.6"/><path d="M-2.4,-4.6 L-0.6,-3.6 L-2.2,-2.4" stroke-width="0.9"/><path d="M2.4,4.6 L0.6,3.6 L2.2,2.4" stroke-width="0.9"/></g>
<path d="M556.0,427.2 L566.0,427.2 L562.2,432.7 L562.2,437.7 L559.8,437.7 L559.8,432.7 Z" fill="none" stroke="#cfcfcf" stroke-width="0.9"/>
<path d="M571.00,431.01 L573.50,433.39 L576.00,431.01" fill="none" stroke="#c4c4c8" stroke-width="1.15"/>
<g transform="translate(586.70,432.50)"><rect x="-0.65" y="-3" width="1.3" height="2.6" fill="#8c8c90"/><path d="M-2.5,-0.2 L2.5,-0.2 L0.5,3 L-0.5,3 Z" fill="#f0f0f0"/><rect x="-3" y="4.2" width="6" height="0.8" fill="#6e6e72"/></g>
<path d="M596.15,429.88 L598.50,432.12 L600.85,429.88" fill="none" stroke="#c4c4c8" stroke-width="1.15"/>
<rect x="304.20" y="442.30" width="117.50" height="10.40" rx="2" fill="none" stroke="#5a5b60" stroke-width="0.9"/>
<circle cx="310.20" cy="448.1" r="3" fill="#73d12c"/>
<text x="316.70" y="450.60" font-size="6.1" fill="#e4e4e4" font-weight="normal" text-anchor="start" textLength="24.40" lengthAdjust="spacingAndGlyphs">First Pass</text>
<circle cx="354.20" cy="448.1" r="3" fill="#f56d00"/>
<text x="360.20" y="450.60" font-size="6.1" fill="#e4e4e4" font-weight="normal" text-anchor="start" textLength="31.50" lengthAdjust="spacingAndGlyphs">ReTest Pass</text>
<circle cx="404.70" cy="448.1" r="3" fill="#e3002a"/>
<text x="410.60" y="450.60" font-size="6.1" fill="#e4e4e4" font-weight="normal" text-anchor="start" textLength="9.00" lengthAdjust="spacingAndGlyphs">Fail</text>
<rect x="171.25" y="457.9" width="0.9" height="197.90" fill="#48484d"/>
<text x="171.70" y="662.60" font-size="6.0" fill="#dcdcdc" font-weight="normal" text-anchor="middle" textLength="3.00" lengthAdjust="spacingAndGlyphs">0</text>
<rect x="202.17" y="457.9" width="0.9" height="197.90" fill="#48484d"/>
<text x="202.62" y="662.60" font-size="6.0" fill="#dcdcdc" font-weight="normal" text-anchor="middle" textLength="9.00" lengthAdjust="spacingAndGlyphs">250</text>
<rect x="233.09" y="457.9" width="0.9" height="197.90" fill="#48484d"/>
<text x="233.54" y="662.60" font-size="6.0" fill="#dcdcdc" font-weight="normal" text-anchor="middle" textLength="9.00" lengthAdjust="spacingAndGlyphs">500</text>
<rect x="264.01" y="457.9" width="0.9" height="197.90" fill="#48484d"/>
<text x="264.46" y="662.60" font-size="6.0" fill="#dcdcdc" font-weight="normal" text-anchor="middle" textLength="9.00" lengthAdjust="spacingAndGlyphs">750</text>
<rect x="294.93" y="457.9" width="0.9" height="197.90" fill="#48484d"/>
<text x="295.38" y="662.60" font-size="6.0" fill="#dcdcdc" font-weight="normal" text-anchor="middle" textLength="12.00" lengthAdjust="spacingAndGlyphs">1000</text>
<rect x="325.85" y="457.9" width="0.9" height="197.90" fill="#48484d"/>
<text x="326.30" y="662.60" font-size="6.0" fill="#dcdcdc" font-weight="normal" text-anchor="middle" textLength="12.00" lengthAdjust="spacingAndGlyphs">1250</text>
<rect x="356.77" y="457.9" width="0.9" height="197.90" fill="#48484d"/>
<text x="357.22" y="662.60" font-size="6.0" fill="#dcdcdc" font-weight="normal" text-anchor="middle" textLength="12.00" lengthAdjust="spacingAndGlyphs">1500</text>
<rect x="387.69" y="457.9" width="0.9" height="197.90" fill="#48484d"/>
<text x="388.14" y="662.60" font-size="6.0" fill="#dcdcdc" font-weight="normal" text-anchor="middle" textLength="12.00" lengthAdjust="spacingAndGlyphs">1750</text>
<rect x="418.61" y="457.9" width="0.9" height="197.90" fill="#48484d"/>
<text x="419.06" y="662.60" font-size="6.0" fill="#dcdcdc" font-weight="normal" text-anchor="middle" textLength="12.00" lengthAdjust="spacingAndGlyphs">2000</text>
<rect x="449.53" y="457.9" width="0.9" height="197.90" fill="#48484d"/>
<text x="449.98" y="662.60" font-size="6.0" fill="#dcdcdc" font-weight="normal" text-anchor="middle" textLength="12.00" lengthAdjust="spacingAndGlyphs">2250</text>
<rect x="480.45" y="457.9" width="0.9" height="197.90" fill="#48484d"/>
<text x="480.90" y="662.60" font-size="6.0" fill="#dcdcdc" font-weight="normal" text-anchor="middle" textLength="12.00" lengthAdjust="spacingAndGlyphs">2500</text>
<rect x="511.37" y="457.9" width="0.9" height="197.90" fill="#48484d"/>
<text x="511.82" y="662.60" font-size="6.0" fill="#dcdcdc" font-weight="normal" text-anchor="middle" textLength="12.00" lengthAdjust="spacingAndGlyphs">2750</text>
<rect x="542.29" y="457.9" width="0.9" height="197.90" fill="#48484d"/>
<text x="542.74" y="662.60" font-size="6.0" fill="#dcdcdc" font-weight="normal" text-anchor="middle" textLength="12.00" lengthAdjust="spacingAndGlyphs">3000</text>
<rect x="573.21" y="457.9" width="0.9" height="197.90" fill="#48484d"/>
<text x="573.66" y="662.60" font-size="6.0" fill="#dcdcdc" font-weight="normal" text-anchor="middle" textLength="12.00" lengthAdjust="spacingAndGlyphs">3250</text>
<rect x="604.13" y="457.9" width="0.9" height="197.90" fill="#48484d"/>
<text x="599.50" y="662.60" font-size="6.0" fill="#dcdcdc" font-weight="normal" text-anchor="middle" textLength="12.00" lengthAdjust="spacingAndGlyphs">3500</text>
<rect x="635.05" y="457.9" width="0.9" height="197.90" fill="#48484d"/>
<text x="635.50" y="662.60" font-size="6.0" fill="#dcdcdc" font-weight="normal" text-anchor="middle" textLength="12.00" lengthAdjust="spacingAndGlyphs">3750</text>
<rect x="665.97" y="457.9" width="0.9" height="197.90" fill="#48484d"/>
<text x="666.42" y="662.60" font-size="6.0" fill="#dcdcdc" font-weight="normal" text-anchor="middle" textLength="12.00" lengthAdjust="spacingAndGlyphs">4000</text>
<rect x="696.89" y="457.9" width="0.9" height="197.90" fill="#48484d"/>
<text x="697.34" y="662.60" font-size="6.0" fill="#dcdcdc" font-weight="normal" text-anchor="middle" textLength="12.00" lengthAdjust="spacingAndGlyphs">4250</text>
<rect x="727.81" y="457.9" width="0.9" height="197.90" fill="#48484d"/>
<text x="728.26" y="662.60" font-size="6.0" fill="#dcdcdc" font-weight="normal" text-anchor="middle" textLength="12.00" lengthAdjust="spacingAndGlyphs">4500</text>
<rect x="758.73" y="457.9" width="0.9" height="197.90" fill="#48484d"/>
<text x="759.18" y="662.60" font-size="6.0" fill="#dcdcdc" font-weight="normal" text-anchor="middle" textLength="12.00" lengthAdjust="spacingAndGlyphs">4750</text>
<rect x="171.70" y="470.90" width="293.37" height="39.40" fill="#73d12c"/>
<rect x="465.07" y="470.90" width="84.35" height="39.40" fill="#f56d00"/>
<rect x="549.42" y="470.90" width="24.24" height="39.40" fill="#e3002a"/>
<text x="120.60" y="492.80" font-size="5.6" fill="#dcdcdc" font-weight="normal" text-anchor="start" textLength="44.50" lengthAdjust="spacingAndGlyphs">PROJ003&lt;VER001</text>
<rect x="171.70" y="536.60" width="76.43" height="39.10" fill="#73d12c"/>
<rect x="248.13" y="536.60" width="2.84" height="39.10" fill="#f56d00"/>
<rect x="250.98" y="536.60" width="0.25" height="39.10" fill="#e3002a"/>
<text x="120.60" y="558.20" font-size="5.6" fill="#dcdcdc" font-weight="normal" text-anchor="start" textLength="44.50" lengthAdjust="spacingAndGlyphs">PROJ005&lt;VER003</text>
<rect x="171.70" y="602.00" width="23.00" height="39.10" fill="#73d12c"/>
<rect x="194.70" y="602.00" width="17.07" height="39.10" fill="#f56d00"/>
<rect x="211.77" y="602.00" width="0.87" height="39.10" fill="#e3002a"/>
<text x="120.60" y="623.20" font-size="5.6" fill="#dcdcdc" font-weight="normal" text-anchor="start" textLength="44.50" lengthAdjust="spacingAndGlyphs">PROJ008&lt;VER001</text>
<text x="553.00" y="668.00" font-size="4.6" fill="#45454a" font-weight="normal" text-anchor="start" textLength="56.00" lengthAdjust="spacingAndGlyphs">Project/Unique Board Count</text>
</g></svg>
<div style="position:absolute;left:1px;top:676.1px;width:1111.2px;height:1.7px;background:#141417"></div>
<div style="position:absolute;left:142px;top:676px;width:27.5px;height:1.6px;background:#4a4b4f"></div>
<div style="position:absolute;left:600px;top:349px;width:600px;height:447.5px;background:#3a3b40;overflow:hidden">
<div style="position:absolute;left:8.16px;top:7.8px;width:327.45px;height:246.70px;transform:scale(1.769,1.776);transform-origin:0 0;filter:blur(0.45px)"><svg width="327.45" height="246.70" style="position:absolute;left:0;top:0;" font-family='"Liberation Sans", sans-serif'>
<g transform="translate(-448.30,-172.90)">
<rect x="448.30" y="172.90" width="327.45" height="246.70" fill="#1c1b20"/>
<rect x="448.30" y="172.90" width="327.45" height="16.40" fill="#26272b"/>
<text x="462.80" y="184.60" font-size="7.3" fill="#d8d9dd" font-weight="bold" text-anchor="start" textLength="73.20" lengthAdjust="spacingAndGlyphs">Daily First Pass Yield (%)</text>
<g transform="translate(740.40,180.80)" fill="none" stroke="#a4a4a8" stroke-width="1"><path d="M-1.3,-3.6 C-4.6,-2.6 -4.8,2.6 -1.4,4.4"/><path d="M1.3,-4.4 C4.8,-2.6 4.6,2.6 1.3,3.6"/><path d="M-2.4,-4.6 L-0.6,-3.6 L-2.2,-2.4" stroke-width="0.9"/><path d="M2.4,4.6 L0.6,3.6 L2.2,2.4" stroke-width="0.9"/></g>
<g transform="translate(752.80,180.80)"><rect x="-0.65" y="-3" width="1.3" height="2.6" fill="#8c8c90"/><path d="M-2.5,-0.2 L2.5,-0.2 L0.5,3 L-0.5,3 Z" fill="#f0f0f0"/><rect x="-3" y="4.2" width="6" height="0.8" fill="#6e6e72"/></g>
<path d="M762.25,177.98 L764.60,180.22 L766.95,177.98" fill="none" stroke="#c4c4c8" stroke-width="1.15"/>
<rect x="585.10" y="191.25" width="53.40" height="10.05" rx="2" fill="none" stroke="#5a5b60" stroke-width="0.9"/>
<circle cx="591.4" cy="196.6" r="3" fill="#73d12c"/>
<text x="597.30" y="199.40" font-size="6.1" fill="#f4f4f4" font-weight="normal" text-anchor="start" textLength="38.50" lengthAdjust="spacingAndGlyphs">First Pass Yield</text>
<rect x="463.1" y="402.25" width="307.70" height="0.9" fill="#48484d"/>
<text x="461.30" y="405.20" font-size="6.0" fill="#f2f2f2" font-weight="normal" text-anchor="end" textLength="5.80" lengthAdjust="spacingAndGlyphs">10</text>
<rect x="463.1" y="380.45" width="307.70" height="0.9" fill="#48484d"/>
<text x="461.30" y="383.40" font-size="6.0" fill="#f2f2f2" font-weight="normal" text-anchor="end" textLength="5.80" lengthAdjust="spacingAndGlyphs">20</text>
<rect x="463.1" y="358.65" width="307.70" height="0.9" fill="#48484d"/>
<text x="461.30" y="361.60" font-size="6.0" fill="#f2f2f2" font-weight="normal" text-anchor="end" textLength="5.80" lengthAdjust="spacingAndGlyphs">30</text>
<rect x="463.1" y="336.85" width="307.70" height="0.9" fill="#48484d"/>
<text x="461.30" y="339.80" font-size="6.0" fill="#f2f2f2" font-weight="normal" text-anchor="end" textLength="5.80" lengthAdjust="spacingAndGlyphs">40</text>
<rect x="463.1" y="315.05" width="307.70" height="0.9" fill="#48484d"/>
<text x="461.30" y="318.00" font-size="6.0" fill="#f2f2f2" font-weight="normal" text-anchor="end" textLength="5.80" lengthAdjust="spacingAndGlyphs">50</text>
<rect x="463.1" y="293.25" width="307.70" height="0.9" fill="#48484d"/>
<text x="461.30" y="296.20" font-size="6.0" fill="#f2f2f2" font-weight="normal" text-anchor="end" textLength="5.80" lengthAdjust="spacingAndGlyphs">60</text>
<rect x="463.1" y="271.45" width="307.70" height="0.9" fill="#48484d"/>
<text x="461.30" y="274.40" font-size="6.0" fill="#f2f2f2" font-weight="normal" text-anchor="end" textLength="5.80" lengthAdjust="spacingAndGlyphs">70</text>
<rect x="463.1" y="249.65" width="307.70" height="0.9" fill="#48484d"/>
<text x="461.30" y="252.60" font-size="6.0" fill="#f2f2f2" font-weight="normal" text-anchor="end" textLength="5.80" lengthAdjust="spacingAndGlyphs">80</text>
<rect x="463.1" y="227.85" width="307.70" height="0.9" fill="#48484d"/>
<text x="461.30" y="230.80" font-size="6.0" fill="#f2f2f2" font-weight="normal" text-anchor="end" textLength="5.80" lengthAdjust="spacingAndGlyphs">90</text>
<rect x="463.1" y="206.05" width="307.70" height="0.9" fill="#48484d"/>
<text x="461.30" y="209.00" font-size="6.0" fill="#f2f2f2" font-weight="normal" text-anchor="end" textLength="8.70" lengthAdjust="spacingAndGlyphs">100</text>
<rect x="467.55" y="402.70" width="0.9" height="4" fill="#48484d"/>
<text x="468.50" y="411.60" font-size="5.8" fill="#f2f2f2" font-weight="normal" text-anchor="middle" textLength="16.50" lengthAdjust="spacingAndGlyphs">Sep 30</text>
<rect x="507.59" y="402.70" width="0.9" height="4" fill="#48484d"/>
<text x="508.54" y="411.60" font-size="5.8" fill="#f2f2f2" font-weight="normal" text-anchor="middle" textLength="13.75" lengthAdjust="spacingAndGlyphs">Oct 7</text>
<rect x="547.63" y="402.70" width="0.9" height="4" fill="#48484d"/>
<text x="548.58" y="411.60" font-size="5.8" fill="#f2f2f2" font-weight="normal" text-anchor="middle" textLength="16.50" lengthAdjust="spacingAndGlyphs">Oct 14</text>
<rect x="587.67" y="402.70" width="0.9" height="4" fill="#48484d"/>
<text x="588.62" y="411.60" font-size="5.8" fill="#f2f2f2" font-weight="normal" text-anchor="middle" textLength="16.50" lengthAdjust="spacingAndGlyphs">Oct 21</text>
<rect x="627.71" y="402.70" width="0.9" height="4" fill="#48484d"/>
<text x="628.66" y="411.60" font-size="5.8" fill="#f2f2f2" font-weight="normal" text-anchor="middle" textLength="16.50" lengthAdjust="spacingAndGlyphs">Oct 28</text>
<rect x="667.75" y="402.70" width="0.9" height="4" fill="#48484d"/>
<text x="668.70" y="411.60" font-size="5.8" fill="#f2f2f2" font-weight="normal" text-anchor="middle" textLength="13.75" lengthAdjust="spacingAndGlyphs">Nov 4</text>
<rect x="707.79" y="402.70" width="0.9" height="4" fill="#48484d"/>
<text x="708.74" y="411.60" font-size="5.8" fill="#f2f2f2" font-weight="normal" text-anchor="middle" textLength="16.50" lengthAdjust="spacingAndGlyphs">Nov 11</text>
<rect x="747.83" y="402.70" width="0.9" height="4" fill="#48484d"/>
<text x="748.78" y="411.60" font-size="5.8" fill="#f2f2f2" font-weight="normal" text-anchor="middle" textLength="16.50" lengthAdjust="spacingAndGlyphs">Nov 18</text>
<polyline points="519.48,230.04 525.20,283.45 530.92,266.01 536.64,267.76" fill="none" stroke="#70cc2c" stroke-width="1.1" stroke-linejoin="round"/>
<circle cx="519.48" cy="230.04" r="1.0" fill="#70cc2c"/>
<circle cx="525.20" cy="283.45" r="1.0" fill="#70cc2c"/>
<circle cx="530.92" cy="266.01" r="1.0" fill="#70cc2c"/>
<circle cx="536.64" cy="267.76" r="1.0" fill="#70cc2c"/>
<polyline points="559.52,376.54 565.24,256.86 570.96,283.45 576.68,312.67" fill="none" stroke="#70cc2c" stroke-width="1.1" stroke-linejoin="round"/>
<circle cx="559.52" cy="376.54" r="1.0" fill="#70cc2c"/>
<circle cx="565.24" cy="256.86" r="1.0" fill="#70cc2c"/>
<circle cx="570.96" cy="283.45" r="1.0" fill="#70cc2c"/>
<circle cx="576.68" cy="312.67" r="1.0" fill="#70cc2c"/>
<polyline points="588.12,272.77 593.84,267.98 599.56,323.78 605.28,284.11 611.00,259.04 616.72,254.68 622.44,339.26 628.16,380.03 633.88,284.98 639.60,315.28 645.32,250.10 651.04,225.03 656.76,268.41 662.48,253.59 668.20,290.87 673.92,333.81 679.64,339.26 685.36,261.00 691.08,253.59 696.80,229.83 702.52,278.44" fill="none" stroke="#70cc2c" stroke-width="1.1" stroke-linejoin="round"/>
<circle cx="588.12" cy="272.77" r="1.0" fill="#70cc2c"/>
<circle cx="593.84" cy="267.98" r="1.0" fill="#70cc2c"/>
<circle cx="599.56" cy="323.78" r="1.0" fill="#70cc2c"/>
<circle cx="605.28" cy="284.11" r="1.0" fill="#70cc2c"/>
<circle cx="611.00" cy="259.04" r="1.0" fill="#70cc2c"/>
<circle cx="616.72" cy="254.68" r="1.0" fill="#70cc2c"/>
<circle cx="622.44" cy="339.26" r="1.0" fill="#70cc2c"/>
<circle cx="628.16" cy="380.03" r="1.0" fill="#70cc2c"/>
<circle cx="633.88" cy="284.98" r="1.0" fill="#70cc2c"/>
<circle cx="639.60" cy="315.28" r="1.0" fill="#70cc2c"/>
<circle cx="645.32" cy="250.10" r="1.0" fill="#70cc2c"/>
<circle cx="651.04" cy="225.03" r="1.0" fill="#70cc2c"/>
<circle cx="656.76" cy="268.41" r="1.0" fill="#70cc2c"/>
<circle cx="662.48" cy="253.59" r="1.0" fill="#70cc2c"/>
<circle cx="668.20" cy="290.87" r="1.0" fill="#70cc2c"/>
<circle cx="673.92" cy="333.81" r="1.0" fill="#70cc2c"/>
<circle cx="679.64" cy="339.26" r="1.0" fill="#70cc2c"/>
<circle cx="685.36" cy="261.00" r="1.0" fill="#70cc2c"/>
<circle cx="691.08" cy="253.59" r="1.0" fill="#70cc2c"/>
<circle cx="696.80" cy="229.83" r="1.0" fill="#70cc2c"/>
<circle cx="702.52" cy="278.44" r="1.0" fill="#70cc2c"/>
<polyline points="719.68,303.51 725.40,279.09 731.12,295.01 736.84,375.89" fill="none" stroke="#70cc2c" stroke-width="1.1" stroke-linejoin="round"/>
<circle cx="719.68" cy="303.51" r="1.0" fill="#70cc2c"/>
<circle cx="725.40" cy="279.09" r="1.0" fill="#70cc2c"/>
<circle cx="731.12" cy="295.01" r="1.0" fill="#70cc2c"/>
<circle cx="736.84" cy="375.89" r="1.0" fill="#70cc2c"/>
<polyline points="748.28,284.98 754.00,313.10 759.72,281.27 765.44,277.57" fill="none" stroke="#70cc2c" stroke-width="1.1" stroke-linejoin="round"/>
<circle cx="748.28" cy="284.98" r="1.0" fill="#70cc2c"/>
<circle cx="754.00" cy="313.10" r="1.0" fill="#70cc2c"/>
<circle cx="759.72" cy="281.27" r="1.0" fill="#70cc2c"/>
<circle cx="765.44" cy="277.57" r="1.0" fill="#70cc2c"/>
<text x="770.80" y="416.30" font-size="4.2" fill="#47474c" font-weight="normal" text-anchor="end" textLength="27.00" lengthAdjust="spacingAndGlyphs">Date/Yield(%)</text>
</g></svg></div>
<div style="position:absolute;left:596.8px;top:7.8px;width:10px;height:500px;background:#1c1b20"></div>
<div style="position:absolute;left:596.8px;top:7.8px;width:10px;height:28.3px;background:#26272b"></div>
</div>
</body></html>
